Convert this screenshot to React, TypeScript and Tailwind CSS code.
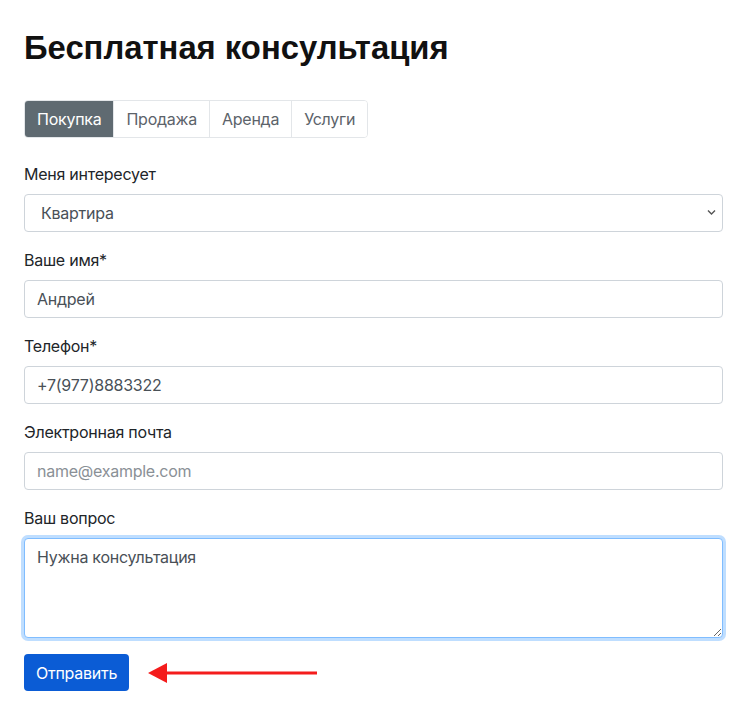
import React from 'react';

const tabs = ['Покупка', 'Продажа', 'Аренда', 'Услуги'];

const inputCls =
  'block w-full h-[38px] px-3 rounded-[4px] border border-[#ced4da] bg-white text-[16px] text-[#495057] placeholder:text-[#8a9096] outline-none';

export default function App() {
  return (
    <div className="min-h-screen bg-white pl-6 pr-[26px] pt-[26px] font-['Inter','Noto_Sans',sans-serif] tracking-[-0.25px] text-[#212529]">
      <h1 className="font-['Liberation_Sans',Arial,sans-serif] text-[32.8px] font-bold leading-[44px] tracking-normal text-[#111]">
        Бесплатная консультация
      </h1>

      {/* Tabs */}
      <div className="mt-[30px] flex w-max overflow-hidden rounded-[4px] border border-[#e3e6e9]">
        {tabs.map((t, i) => (
          <button
            key={t}
            className={
              i === 0
                ? 'h-[36px] px-3 bg-[#5f6a71] text-[16px] text-white'
                : 'h-[36px] px-3 border-l border-[#e3e6e9] bg-white text-[16px] text-[#5c636a]'
            }
          >
            {t}
          </button>
        ))}
      </div>

      <form className="mt-6" onSubmit={(e) => e.preventDefault()}>
        <div className="mb-4">
          <label className="mb-2 block text-[16px] leading-6">Меня интересует</label>
          <div className="relative">
            <select className={inputCls + ' appearance-none pl-4'} defaultValue="Квартира">
              <option>Квартира</option>
            </select>
            <svg
              className="pointer-events-none absolute right-[7px] top-[15px]"
              width="9"
              height="7"
              viewBox="0 0 9 7"
            >
              <path d="M1 1.5 L4.5 5 L8 1.5" fill="none" stroke="#555" strokeWidth="1.4" />
            </svg>
          </div>
        </div>

        <div className="mb-4">
          <label className="mb-2 block text-[16px] leading-6">Ваше имя*</label>
          <input className={inputCls} defaultValue="Андрей" />
        </div>

        <div className="mb-4">
          <label className="mb-2 block text-[16px] leading-6">Телефон*</label>
          <input className={inputCls} defaultValue="+7(977)8883322" />
        </div>

        <div className="mb-4">
          <label className="mb-2 block text-[16px] leading-6">Электронная почта</label>
          <input className={inputCls} placeholder="name@example.com" />
        </div>

        <div className="mb-4">
          <label className="mb-2 block text-[16px] leading-6">Ваш вопрос</label>
          <textarea
            className="block h-[100px] w-full rounded-[4px] border border-[#80bdff] bg-white px-3 py-[6px] text-[16px] leading-6 text-[#495057] shadow-[0_0_0_3px_rgba(0,123,255,0.25)] outline-none"
            defaultValue="Нужна консультация"
          />
        </div>

        <div className="flex items-center">
          <button className="h-[37px] rounded-[4px] bg-[#0b5cd5] px-3 text-[16px] text-white">
            Отправить
          </button>
          <svg className="ml-[18px]" width="172" height="22" viewBox="0 0 172 22">
            <path d="M20 11 L170 11" stroke="#f41c1c" strokeWidth="3" />
            <path d="M1 11 L20 1 L20 21 Z" fill="#f41c1c" />
          </svg>
        </div>
      </form>
    </div>
  );
}
